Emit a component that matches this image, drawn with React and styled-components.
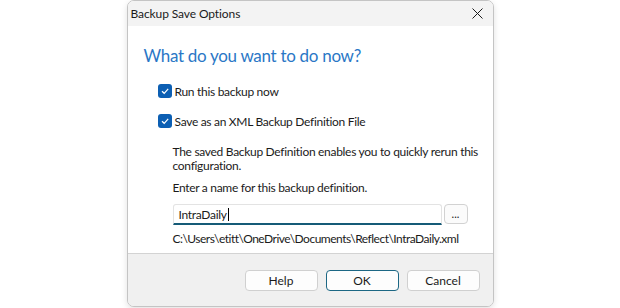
import React from 'react';
import styled, { createGlobalStyle } from 'styled-components';

const GlobalStyle = createGlobalStyle`
  html, body {
    margin: 0;
    padding: 0;
    background: #ffffff;
  }
  body {
    font-family: "Lato", "Noto Sans", sans-serif;
    color: #1b1b1b;
  }
`;

const Page = styled.div`
  width: 620px;
  height: 308px;
  display: flex;
  justify-content: center;
  overflow: hidden;
`;

const Dialog = styled.div`
  width: 367px;
  height: 307px;
  box-sizing: border-box;
  border: 1px solid #c4c4c4;
  border-radius: 7px;
  overflow: hidden;
  display: flex;
  flex-direction: column;
  box-shadow: 0 2px 6px rgba(0, 0, 0, 0.12);
  background: #ffffff;
`;

const TitleBar = styled.div`
  height: 25px;
  flex: none;
  background: #f3f3f3;
  display: flex;
  align-items: center;
  justify-content: space-between;
  padding: 0 9px 0 3px;
  font-size: 12px;
  letter-spacing: -0.1px;
`;

const CloseButton = styled.div`
  width: 12px;
  height: 12px;
  display: flex;
  align-items: center;
  justify-content: center;
`;

const Body = styled.div`
  flex: 1;
  padding: 18px 0 0 16px;
  font-size: 12px;
  letter-spacing: -0.3px;
`;

const Heading = styled.h1`
  margin: 0 0 15px 0;
  font-size: 17px;
  line-height: 24px;
  font-weight: 400;
  letter-spacing: -0.3px;
  color: #2a77c6;
`;

const CheckRow = styled.label`
  display: flex;
  align-items: center;
  gap: 3px;
  height: 16px;
  margin: 0 0 ${p => p.$after}px 14px;
`;

const Box = styled.span`
  width: 14px;
  height: 14px;
  border-radius: 3px;
  background: #0c5fb3;
  display: flex;
  align-items: center;
  justify-content: center;
`;

const Indent = styled.div`
  margin-left: 29px;
`;

const Text = styled.p`
  margin: 0 0 ${p => p.$after}px 0;
  line-height: 14px;
  letter-spacing: ${p => p.$tight ? '-0.5px' : 'inherit'};
`;

const InputRow = styled.div`
  display: flex;
  gap: 2px;
  height: 21px;
  margin-bottom: 7px;
`;

const Field = styled.div`
  width: 269px;
  box-sizing: border-box;
  border: 1px solid #e3e3e3;
  border-bottom: 2px solid #155b77;
  border-radius: 3px 3px 0 0;
  padding: 0 5px;
  display: flex;
  align-items: center;
`;

const Caret = styled.span`
  display: inline-block;
  width: 1px;
  height: 13px;
  background: #000;
  margin-left: 1px;
`;

const SmallButton = styled.button`
  width: 24px;
  height: 20px;
  box-sizing: border-box;
  border: 1px solid #d2d2d2;
  border-radius: 4px;
  background: #fbfbfb;
  font: inherit;
  font-size: 11px;
  line-height: 1;
  padding: 0 0 2px 0;
  color: #222;
`;

const Footer = styled.div`
  height: 53px;
  flex: none;
  box-sizing: border-box;
  border-top: 1px solid #d3d3d3;
  background: #f0f0f0;
  display: flex;
  justify-content: flex-end;
  gap: 8px;
  padding: 16px 13px 0 0;
`;

const Button = styled.button`
  width: 73px;
  height: 21px;
  box-sizing: border-box;
  border: 1px solid ${p => (p.$primary ? '#1c6784' : '#d0d0d0')};
  border-radius: 4px;
  background: #fdfdfd;
  font: inherit;
  font-size: 12px;
  color: #1b1b1b;
  padding: 0;
`;

export default function App() {
  return (
    <Page>
      <GlobalStyle />
      <Dialog>
        <TitleBar>
          <span>Backup Save Options</span>
          <CloseButton>
            <svg width="11" height="11" viewBox="0 0 11 11">
              <path d="M0.5 0.5 L10.5 10.5 M10.5 0.5 L0.5 10.5" stroke="#1a1a1a" strokeWidth="1" />
            </svg>
          </CloseButton>
        </TitleBar>
        <Body>
          <Heading>What do you want to do now?</Heading>
          <CheckRow $after={14}>
            <Box>
              <svg width="10" height="10" viewBox="0 0 10 10">
                <path d="M2 5.2 L4.2 7.3 L8.2 2.8" fill="none" stroke="#fff" strokeWidth="1.2" />
              </svg>
            </Box>
            Run this backup now
          </CheckRow>
          <CheckRow $after={16}>
            <Box>
              <svg width="10" height="10" viewBox="0 0 10 10">
                <path d="M2 5.2 L4.2 7.3 L8.2 2.8" fill="none" stroke="#fff" strokeWidth="1.2" />
              </svg>
            </Box>
            Save as an XML Backup Definition File
          </CheckRow>
          <Indent>
            <Text $after={8}>
              The saved Backup Definition enables you to quickly rerun this configuration.
            </Text>
            <Text $after={9}>Enter a name for this backup definition.</Text>
            <InputRow>
              <Field>
                IntraDaily<Caret />
              </Field>
              <SmallButton>...</SmallButton>
            </InputRow>
            <Text $after={0} $tight>C:\Users\etitt\OneDrive\Documents\Reflect\IntraDaily.xml</Text>
          </Indent>
        </Body>
        <Footer>
          <Button>Help</Button>
          <Button $primary>OK</Button>
          <Button>Cancel</Button>
        </Footer>
      </Dialog>
    </Page>
  );
}
